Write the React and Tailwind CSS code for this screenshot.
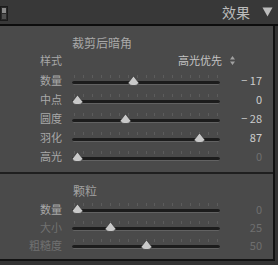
const font = { fontFamily: '"Noto Sans CJK SC", "Noto Sans", sans-serif' };

const vignette = [
  { label: "数量", value: "− 17", pos: 41.5 },
  { label: "中点", value: "0", pos: 3.5 },
  { label: "圆度", value: "− 28", pos: 36 },
  { label: "羽化", value: "87", pos: 86 },
  { label: "高光", value: "0", pos: 3.5, dimValue: true },
];

const grain = [
  { label: "数量", value: "0", pos: 3.5, dimLabel: false },
  { label: "大小", value: "25", pos: 26, dimLabel: true },
  { label: "粗糙度", value: "50", pos: 50, dimLabel: true },
];

const Thumb = ({ pos }) => (
  <svg
    className="absolute top-[4px]"
    style={{ left: `calc(${pos}% - 5.5px)` }}
    width="11"
    height="10"
    viewBox="0 0 11 10"
  >
    <path d="M5.5 0 L10.5 6.5 Q10.5 9.5 7 9.5 L4 9.5 Q0.5 9.5 0.5 6.5 Z" fill="#c9c9c9" stroke="#2a2a2a" strokeWidth="0.6" />
  </svg>
);

function Track({ pos }) {
  return (
    <div className="relative w-[148px] h-full">
      <div className="absolute left-0 right-0 top-[3px] flex justify-between px-[2px]">
        {Array.from({ length: 17 }).map((_, i) => (
          <div key={i} className="w-px h-[3px] bg-[#5c5c5c]" />
        ))}
      </div>
      <div className="absolute left-0 right-0 top-[9px] h-[4px] rounded-full bg-[#1c1c1c] border-b border-[#626262]" />
      <Thumb pos={pos} />
    </div>
  );
}

function SliderRow({ label, value, pos, h, dimLabel, dimValue }) {
  return (
    <div className={`flex items-center ${h}`}>
      <div className={`w-[62px] text-right text-[11px] leading-none ${dimLabel ? "text-[#717171]" : "text-[#a8a8a8]"}`}>
        {label}
      </div>
      <div className="ml-[10px] h-full flex items-center">
        <div className="h-[18px]">
          <Track pos={pos} />
        </div>
      </div>
      <div className={`w-[42px] text-right text-[11px] leading-none ${dimValue ? "text-[#6f6f6f]" : "text-[#cdcdcd]"}`}>
        {value}
      </div>
    </div>
  );
}

export default function App() {
  return (
    <div className="w-[278px] h-[265px] bg-[#333333] overflow-hidden" style={font}>
      <div className="h-[26px] bg-[#383838] border-b-2 border-[#0d0d0d] flex items-center justify-between pr-[5px]">
        <div className="w-[8px] h-[15px] mt-[2px] border border-[#1b1b1b] bg-[#2a2a2a] flex flex-col gap-[1px] p-[1px]">
          <div className="flex-1 bg-[#8a8a8a]" />
          <div className="flex-1 bg-[#4e4e4e]" />
        </div>
        <div className="flex items-center gap-[12px]">
          <span className="text-[14px] text-[#bcbcbc] leading-none">效果</span>
          <svg width="11" height="10" viewBox="0 0 11 10">
            <path d="M0.5 0.5 L10.5 0.5 L5.5 9.5 Z" fill="#bdbdbd" />
          </svg>
        </div>
      </div>

      <div className="w-[275px] h-[235px] bg-[#4a4a4a] border-r-2 border-b-2 border-[#121212] flex flex-col">
        <div className="pt-[8px] pb-[6px] border-b-2 border-[#1f1f1f]">
          <div className="h-[18px] pl-[72px] flex items-center text-[12px] text-[#a9a9a9] leading-none">
            裁剪后暗角
          </div>
          <div className="h-[16px] flex items-center">
            <div className="w-[62px] text-right text-[11px] text-[#a8a8a8] leading-none">样式</div>
            <div className="ml-[116px] text-[11px] text-[#c4c4c4] leading-none">高光优先</div>
            <svg className="ml-[8px]" width="5" height="9" viewBox="0 0 5 9">
              <path d="M2.5 0 L5 3.5 L0 3.5 Z M2.5 9 L5 5.5 L0 5.5 Z" fill="#a0a0a0" />
            </svg>
          </div>
          <div className="mt-[3px]">
            {vignette.map((r) => (
              <SliderRow key={r.label} {...r} h="h-[19px]" />
            ))}
          </div>
        </div>

        <div className="pt-[8px]">
          <div className="h-[18px] pl-[73px] flex items-center text-[12px] text-[#a0a0a0] leading-none">
            颗粒
          </div>
          {grain.map((r) => (
            <SliderRow key={r.label} {...r} h="h-[18px]" dimValue />
          ))}
        </div>
      </div>
    </div>
  );
}
